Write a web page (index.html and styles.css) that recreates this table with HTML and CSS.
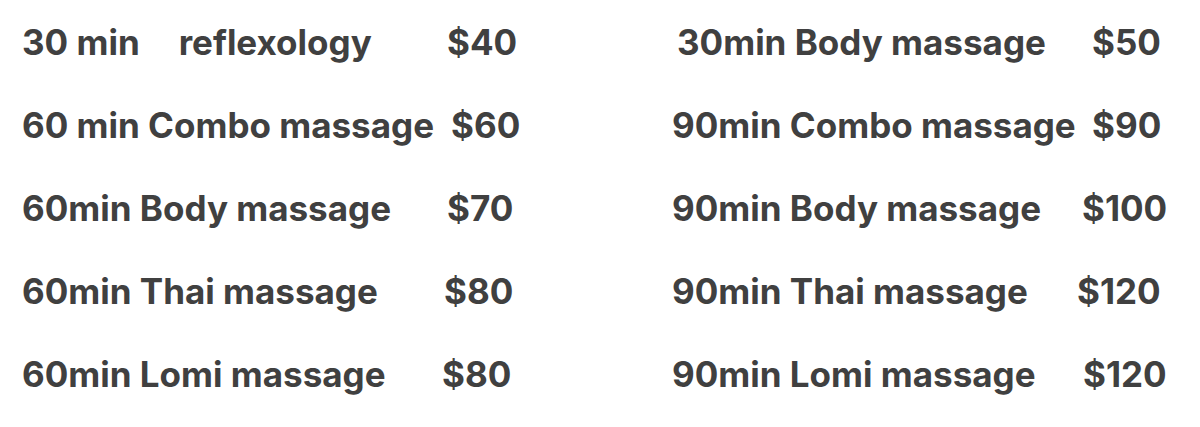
FILE: index.html
```html
<!DOCTYPE html>
<html lang="en">
<head>
<meta charset="utf-8">
<title>Massage prices</title>
<link rel="stylesheet" href="styles.css">
</head>
<body>
<main class="menu">
  <section class="col col-left">
    <div class="item"><span class="name">30 min<span class="gap">reflexology</span></span><span class="price">$40</span></div>
    <div class="item"><span class="name">60 min Combo massage</span><span class="price shift-r4">$60</span></div>
    <div class="item"><span class="name">60min Body massage</span><span class="price">$70</span></div>
    <div class="item"><span class="name">60min Thai massage</span><span class="price shift-l3">$80</span></div>
    <div class="item"><span class="name">60min Lomi massage</span><span class="price shift-l5">$80</span></div>
  </section>
  <section class="col col-right">
    <div class="item"><span class="name indent">30min Body massage</span><span class="price shift-r10">$50</span></div>
    <div class="item"><span class="name">90min Combo massage</span><span class="price shift-r10">$90</span></div>
    <div class="item"><span class="name">90min Body massage</span><span class="price">$100</span></div>
    <div class="item"><span class="name">90min Thai massage</span><span class="price shift-l5">$120</span></div>
    <div class="item"><span class="name">90min Lomi massage</span><span class="price shift-r1">$120</span></div>
  </section>
</main>
</body>
</html>
```
FILE: styles.css
```css
html, body {
  margin: 0;
  padding: 0;
  background: #ffffff;
}
body {
  width: 1200px;
  height: 427px;
  overflow: hidden;
  font-family: Inter, "Liberation Sans", sans-serif;
  font-weight: 700;
  font-size: 35px;
  color: #404040;
}
.menu {
  display: flex;
  padding-top: 1px;
}
.col {
  display: flex;
  flex-direction: column;
}
.col-left {
  padding-left: 22px;
  width: 628px;
}
.col-right {
  padding-left: 22px;
}
.item {
  display: grid;
  grid-template-columns: 425px auto;
  height: 83px;
  line-height: 83px;
  white-space: nowrap;
}
.col-right .item {
  grid-template-columns: 410px auto;
}
.gap {
  margin-left: 39px;
}
.indent {
  margin-left: 5px;
}
.shift-r10 { margin-left: 10px; }
.shift-r4 { margin-left: 4px; }
.shift-r1 { margin-left: 1px; }
.shift-l3 { margin-left: -3px; }
.shift-l5 { margin-left: -5px; }
```
